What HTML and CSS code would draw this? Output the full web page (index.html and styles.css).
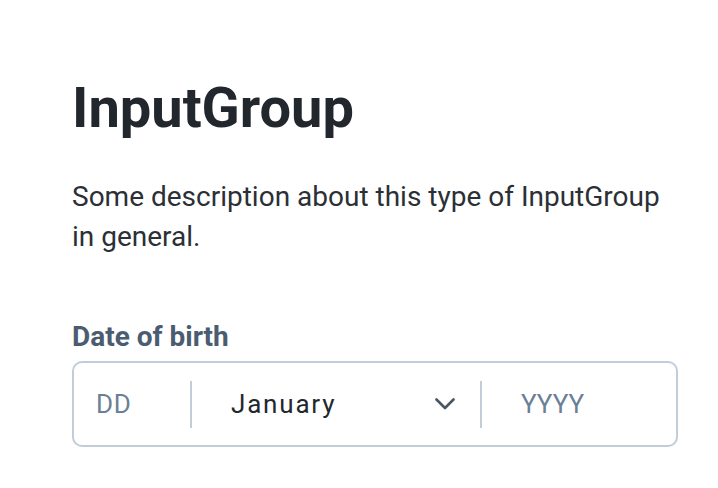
FILE: index.html
```html
<!DOCTYPE html>
<html lang="en">
<head>
<meta charset="utf-8">
<title>InputGroup</title>
<link rel="stylesheet" href="styles.css">
</head>
<body>
<main class="page">
  <h1 class="title">InputGroup</h1>
  <p class="desc">Some description about this type of InputGroup in general.</p>
  <div class="field">
    <label class="label">Date of birth</label>
    <div class="group">
      <div class="seg seg-day"><span class="placeholder">DD</span></div>
      <div class="sep"></div>
      <div class="seg seg-month">
        <span class="value">January</span>
        <svg class="chev" width="20" height="12" viewBox="0 0 20 12" aria-hidden="true"><path d="M1.5 1.5 L10 10 L18.5 1.5" fill="none" stroke="#4a5568" stroke-width="2.6" stroke-linecap="round" stroke-linejoin="round"/></svg>
      </div>
      <div class="sep"></div>
      <div class="seg seg-year"><span class="placeholder">YYYY</span></div>
    </div>
  </div>
</main>
</body>
</html>
```
FILE: styles.css
```css
html, body {
  margin: 0;
  padding: 0;
  background: #ffffff;
}
body {
  font-family: Roboto, "Liberation Sans", sans-serif;
}
.page {
  width: 606px;
  margin-left: 72px;
  padding-top: 76px;
}
.title {
  margin: 0;
  font-size: 56px;
  line-height: 64px;
  font-weight: 700;
  color: #22272e;
}
.desc {
  margin: 37px 0 0 0;
  font-size: 28px;
  line-height: 40px;
  color: #2b3036;
}
.field {
  margin-top: 62px;
  display: flex;
  flex-direction: column;
  gap: 6px;
}
.label {
  font-size: 28px;
  line-height: 36px;
  font-weight: 700;
  color: #4b5c71;
}
.group {
  display: flex;
  align-items: center;
  height: 82px;
  border: 2px solid #c1cdd9;
  border-radius: 10px;
  box-sizing: content-box;
}
.seg {
  display: flex;
  align-items: center;
  height: 100%;
  font-size: 26px;
}
.seg-day {
  width: 94px;
  padding-left: 22px;
  letter-spacing: 0.8px;
}
.seg-month {
  width: 288px;
  padding-left: 39px;
  padding-right: 25px;
  box-sizing: border-box;
  justify-content: space-between;
}
.seg-year {
  flex: 1;
  padding-left: 39px;
}
.sep {
  width: 2px;
  height: 47px;
  background: #c1cdd9;
}
.placeholder {
  color: #6b7f97;
}
.value {
  color: #22272e;
  letter-spacing: 1.8px;
}
.chev {
  display: block;
}
```
